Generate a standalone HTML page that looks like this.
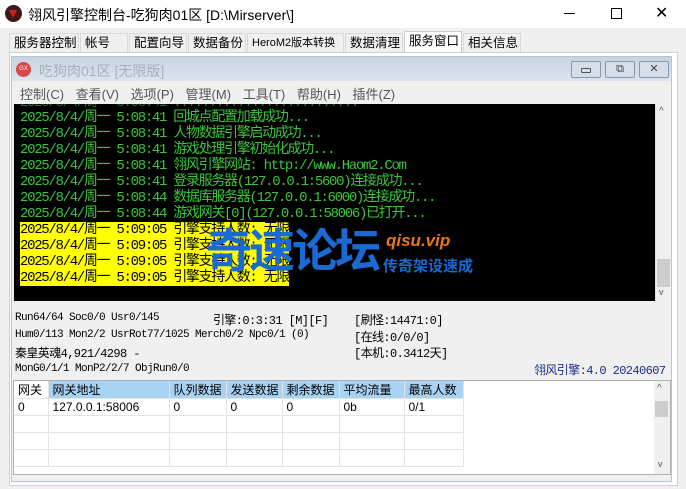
<!DOCTYPE html>
<html><head><meta charset="utf-8"><style>
*{margin:0;padding:0;box-sizing:border-box}
body{width:686px;height:489px;background:#f0f0f0;font-family:"Liberation Sans","Noto Sans CJK SC",sans-serif;position:relative;overflow:hidden;font-size:12px;color:#000}
.abs{position:absolute}
.title{left:0;top:0;width:686px;height:28px;background:#fff}
.tab{position:absolute;top:33px;height:19px;border:1px solid #d9d9d9;border-bottom:none;background:#f0f0f0;font-size:12.5px;line-height:18px;padding-left:4px;white-space:nowrap}
.con{left:14px;top:104px;width:641px;height:197px;background:#000;overflow:hidden}
.ln{position:absolute;left:6px;font-family:"Liberation Mono","Noto Sans CJK SC",monospace;font-size:14px;letter-spacing:-1.3px;white-space:nowrap;line-height:16px;color:#3ec43e}
.y{background:#ffff00;color:#000;width:269px}
.st{font-family:"Liberation Mono","Noto Sans CJK SC",monospace;font-size:11px;letter-spacing:-0.6px;white-space:nowrap;position:absolute}
table{border-collapse:collapse;font-size:12px}
td{border-right:1px solid #e4e4e4;border-bottom:1px solid #e4e4e4;height:17px;padding-left:4px;white-space:nowrap}
</style></head><body>
<div class="abs title">
 <div class="abs" style="left:5px;top:5px;width:17px;height:17px;border-radius:50%;background:#3a1a1a"><div class="abs" style="left:4px;top:5px;width:0;height:0;border-left:4.5px solid transparent;border-right:4.5px solid transparent;border-top:8px solid #d02020"></div></div>
 <div class="abs" style="left:28px;top:5px;font-size:14px">翎风引擎控制台-吃狗肉01区 [D:\Mirserver\]</div>
 <div class="abs" style="left:564px;top:13px;width:11px;height:1px;background:#000"></div>
 <div class="abs" style="left:611px;top:8px;width:11px;height:11px;border:1px solid #000"></div>
 <div class="abs" style="left:655px;top:3px;font-size:16px">✕</div>
</div>
<div class="tab" style="left:9px;width:70px">服务器控制</div>
<div class="tab" style="left:80px;width:48px">帐号</div>
<div class="tab" style="left:129px;width:58px">配置向导</div>
<div class="tab" style="left:188px;width:58px">数据备份</div>
<div class="tab" style="left:247px;width:97px;font-size:11px">HeroM2版本转换</div>
<div class="tab" style="left:345px;width:58px">数据清理</div>
<div class="tab" style="left:404px;width:58px;top:31px;height:22px;background:#fff;border-color:#ccc">服务窗口</div>
<div class="tab" style="left:463px;width:58px">相关信息</div>
<div class="abs" style="left:9px;top:52px;width:669px;height:434px;background:#fff;border:1px solid #d0d0d0"></div>
<div class="abs" style="left:11px;top:56px;width:661px;height:426px;background:#f0f0f0;border:1px solid #b8c4d2"></div>
<div class="abs" style="left:12px;top:57px;width:659px;height:24px;background:linear-gradient(#c8d4e2,#dbe4ee)"></div>
<div class="abs" style="left:16px;top:62px;width:15px;height:15px;border-radius:50%;background:#d84848;color:#fff;font-size:6px;line-height:15px;text-align:center">GX</div>
<div class="abs" style="left:39px;top:61px;font-size:14px;color:#a8b0bc">吃狗肉01区 [无限版]</div>
<div class="abs" style="left:571px;top:61px;width:30px;height:17px;border:1px solid #8898ac;border-radius:2px;background:#d4dde8"><div class="abs" style="left:9px;top:6px;width:10px;height:5px;border:1px solid #555;border-radius:1px"></div></div>
<div class="abs" style="left:605px;top:61px;width:30px;height:17px;border:1px solid #8898ac;border-radius:2px;background:#d4dde8;font-size:11px;text-align:center;line-height:15px;color:#444">⧉</div>
<div class="abs" style="left:639px;top:61px;width:30px;height:17px;border:1px solid #8898ac;border-radius:2px;background:#d4dde8;font-size:11px;text-align:center;line-height:15px;color:#444">✕</div>
<div class="abs" style="left:20px;top:84px;font-size:13px;color:#555;word-spacing:8px;white-space:nowrap">控制(C) 查看(V) 选项(P) 管理(M) 工具(T) 帮助(H) 插件(Z)</div>
<div class="abs con">
 <div class="ln" style="top:-9px;color:#2a6a2a">2025/8/4/周一 5:08:41 ..........................</div>
 <div class="ln" style="top:6px">2025/8/4/周一 5:08:41 回城点配置加载成功...</div>
 <div class="ln" style="top:22px">2025/8/4/周一 5:08:41 人物数据引擎启动成功...</div>
 <div class="ln" style="top:38px">2025/8/4/周一 5:08:41 游戏处理引擎初始化成功...</div>
 <div class="ln" style="top:54px">2025/8/4/周一 5:08:41 翎风引擎网站: http://www.Haom2.Com</div>
 <div class="ln" style="top:70px">2025/8/4/周一 5:08:41 登录服务器(127.0.0.1:5600)连接成功...</div>
 <div class="ln" style="top:86px">2025/8/4/周一 5:08:44 数据库服务器(127.0.0.1:6000)连接成功...</div>
 <div class="ln" style="top:102px">2025/8/4/周一 5:08:44 游戏网关[0](127.0.0.1:58006)已打开...</div>
 <div class="ln y" style="top:118px">2025/8/4/周一 5:09:05 引擎支持人数: 无限</div>
 <div class="ln y" style="top:134px">2025/8/4/周一 5:09:05 引擎支持人数: 无限</div>
 <div class="ln y" style="top:150px">2025/8/4/周一 5:09:05 引擎支持人数: 无限</div>
 <div class="ln y" style="top:166px">2025/8/4/周一 5:09:05 引擎支持人数: 无限</div>
 <div class="abs" style="left:192px;top:117px;font-size:46px;font-weight:bold;color:#1a6ad4;letter-spacing:-3px;line-height:60px;white-space:nowrap">奇速论坛</div>
 <div class="abs" style="left:372px;top:127px;font-size:17px;font-weight:bold;font-style:italic;color:#e8781a;white-space:nowrap">qisu.vip</div>
 <div class="abs" style="left:369px;top:151px;font-size:15px;font-weight:bold;color:#1a6ad4;white-space:nowrap">传奇架设速成</div>
</div>
<div class="abs" style="left:655px;top:104px;width:16px;height:197px;background:#f0f0f0;border-left:1px solid #ddd">
 <div class="abs" style="left:3px;top:2px;font-size:10px;color:#555">^</div>
 <div class="abs" style="left:1px;top:155px;width:13px;height:28px;background:#cdcdcd"></div>
 <div class="abs" style="left:3px;top:183px;font-size:9px;color:#555">v</div>
</div>
<div class="st" style="left:15px;top:312px">Run64/64 Soc0/0 Usr0/145</div>
<div class="st" style="left:213px;top:311px;font-size:12px">引擎:0:3:31 [M][F]</div>
<div class="st" style="left:354px;top:311px;font-size:12px">[刷怪:14471:0]</div>
<div class="st" style="left:15px;top:329px">Hum0/113 Mon2/2 UsrRot77/1025 Merch0/2 Npc0/1 (0)</div>
<div class="st" style="left:354px;top:328px;font-size:12px">[在线:0/0/0]</div>
<div class="st" style="left:15px;top:344px;font-size:12px">秦皇英魂4,921/4298 -</div>
<div class="st" style="left:354px;top:344px;font-size:12px">[本机:0.3412天]</div>
<div class="st" style="left:15px;top:363px">MonG0/1/1 MonP2/2/7 ObjRun0/0</div>
<div class="st" style="left:534px;top:361px;font-size:12px;color:#1c2a8a">翎风引擎:4.0 20240607</div>
<div class="abs" style="left:13px;top:380px;width:658px;height:95px;background:#fff;border:1px solid #b0b0b0;overflow:hidden">
<table>
<tr style="height:17px"><td style="width:34px;background:#fff">网关</td><td style="width:121px;background:#a8d2f2">网关地址</td><td style="width:57px;background:#a8d2f2">队列数据</td><td style="width:56px;background:#a8d2f2">发送数据</td><td style="width:57px;background:#a8d2f2">剩余数据</td><td style="width:65px;background:#a8d2f2">平均流量</td><td style="width:59px;background:#a8d2f2">最高人数</td></tr>
<tr><td>0</td><td>127.0.0.1:58006</td><td>0</td><td>0</td><td>0</td><td>0b</td><td>0/1</td></tr>
<tr><td></td><td></td><td></td><td></td><td></td><td></td><td></td></tr>
<tr><td></td><td></td><td></td><td></td><td></td><td></td><td></td></tr>
<tr><td></td><td></td><td></td><td></td><td></td><td></td><td></td></tr>
</table>
<div class="abs" style="right:0;top:0;width:16px;height:95px;background:#f0f0f0">
 <div class="abs" style="left:3px;top:2px;font-size:10px;color:#555">^</div>
 <div class="abs" style="left:1px;top:20px;width:13px;height:16px;background:#cdcdcd"></div>
 <div class="abs" style="left:4px;top:78px;font-size:9px;color:#555">v</div>
</div>
</div>
</body></html>
